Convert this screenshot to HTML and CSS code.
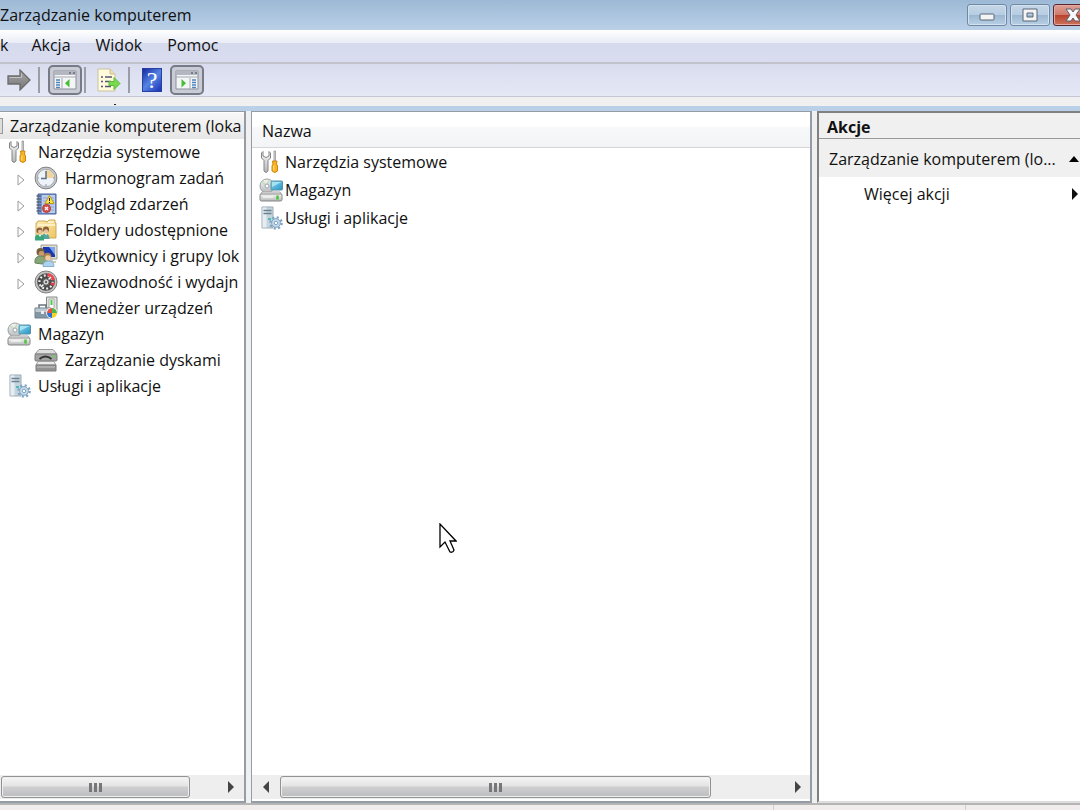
FILE: index.html
```html
<!DOCTYPE html>
<html lang="pl">
<head>
  <meta charset="UTF-8">
  <meta name="viewport" content="width=device-width, initial-scale=1.0">
  <title>Zarządzanie komputerem</title>
  <link rel="stylesheet" href="styles.css">
</head>
<body>
<!-- icon set -->
<svg class="sprite" aria-hidden="true">
  <defs>
    <linearGradient id="metal" x1="0" y1="0" x2="0" y2="1">
      <stop offset="0" stop-color="#f8f8f8"/><stop offset="1" stop-color="#b4b7b9"/>
    </linearGradient>
    <linearGradient id="screen" x1="0" y1="0" x2="1" y2="1">
      <stop offset="0" stop-color="#8ad6ee"/><stop offset="1" stop-color="#2893c4"/>
    </linearGradient>
    <linearGradient id="folder" x1="0" y1="0" x2="1" y2="1">
      <stop offset="0" stop-color="#fdeeb8"/><stop offset="1" stop-color="#edc464"/>
    </linearGradient>
    <linearGradient id="arrow" x1="0" y1="0" x2="0" y2="1">
      <stop offset="0" stop-color="#a8a8a8"/><stop offset="1" stop-color="#757575"/>
    </linearGradient>
  </defs>
  <symbol id="tools" viewBox="0 0 24 24">
    <path d="M4 1.500 2.500 3v5L5 10.500V21q2 3 4 0V10.500L11.500 8V3L10 1.500V6L7 7.500 4 6z" fill="url(#metal)" stroke="#858585"/>
    <path d="M15 1h1.500v11H15z" fill="#ddd" stroke="#888" stroke-width=".7"/>
    <path d="M13.500 11h4.500l-.5 3 1 2v5q-2.500 3-5.500 0v-5l1-2z" fill="#f8b521" stroke="#cd860f"/>
    <path d="M14.800 15.500v5" stroke="#ffe18a"/>
  </symbol>
  <symbol id="clock" viewBox="0 0 24 24">
    <circle cx="12" cy="12" r="10.900" fill="#c6c8ca" stroke="#7f8184"/>
    <circle cx="12" cy="12" r="8.700" fill="#eef3f9" stroke="#a6adb5"/>
    <path d="M12 12V4a8 8 0 0 1 8 8z" fill="#f3d59b"/>
    <path d="M12 5v7.500H7" fill="none" stroke="#5c7086" stroke-width="1.500"/>
    <path d="M12 18v2M4 12h1M19 12h1" stroke="#8795a5"/>
  </symbol>
  <symbol id="journal" viewBox="0 0 24 24">
    <path d="M4 2h18v20H4z" fill="#7598d2" stroke="#4a6398"/>
    <path d="M8 3h13v18H8z" fill="#bccdec"/>
    <path d="M9 6h11M9 9h11M9 12h11M9 15h11M9 18h11" stroke="#8fa5cc"/>
    <path d="M2.500 4H7M2.500 7H7M2.500 10H7M2.500 13H7M2.500 16H7M2.500 19H7" stroke="#5b6474" stroke-width="1.300"/>
    <path d="M15.500 3.500l4.500 8h-9z" fill="#ffe33d" stroke="#bd9a20"/>
    <path d="M15.500 6v3M15.500 10v1" stroke="#222"/>
    <circle cx="12.500" cy="16.500" r="4" fill="#d84f4c" stroke="#b13b3e"/>
    <path d="M11 15l3 3m0-3l-3 3" stroke="#fff" stroke-width="1.200"/>
  </symbol>
  <symbol id="shared" viewBox="0 0 24 24">
    <path d="M3 5l1-2h7l2 1 2-2h6v3h1v15H2V5z" fill="url(#folder)" stroke="#cfab58"/>
    <path d="M4 7h17M14 4h6" stroke="#fff8d7" stroke-width="1.500"/>
    <circle cx="5.500" cy="12.500" r="3" fill="#8a5f3d"/><circle cx="6" cy="13.800" r="2" fill="#e9c4a0"/>
    <circle cx="12" cy="11.500" r="3" fill="#8a5f3d"/><circle cx="12" cy="13.200" r="2" fill="#e9c4a0"/>
    <path d="M8 21v-3q1-3 4-2 3.500 0 3.500 5z" fill="#55a59e"/>
    <path d="M1 22.500v-3q0-3 4.500-3t4.500 3v3z" fill="#38a679"/>
    <path d="M4.500 16.500L6 19l1.500-2.500M11 15.500l1 2 1-2" fill="#fff"/>
  </symbol>
  <symbol id="users" viewBox="0 0 24 24">
    <path d="M7 1h16v14H7z" fill="#dedccf" stroke="#a09e90"/>
    <path d="M9 3h12v10H9z" fill="#1838b0"/><path d="M15 3h6v8z" fill="#7ba4f2"/>
    <path d="M15 15h4v2h3v2h-8z" fill="#cac8ba"/>
    <circle cx="6.500" cy="8" r="4" fill="#74603c"/><circle cx="7.500" cy="9.700" r="2.800" fill="#c99b6e"/>
    <path d="M1 19q-1-7 6-7t6 7l-5 1z" fill="#86a678" stroke="#65855b"/>
    <circle cx="13.500" cy="12.500" r="3.800" fill="#ac7f4c"/><circle cx="14" cy="14" r="2.800" fill="#edcba5"/>
    <path d="M9 22.500q0-5.500 5.500-5.500t5.500 5.500z" fill="#afd3ee" stroke="#82b0d2"/>
  </symbol>
  <symbol id="gauge" viewBox="0 0 24 24">
    <circle cx="12" cy="12" r="11" fill="#c3c3c3" stroke="#808080"/>
    <circle cx="12" cy="12" r="8.800" fill="#4b4b4b"/>
    <circle cx="12" cy="12" r="6.600" fill="none" stroke="#eee" stroke-width="2.200" stroke-dasharray="1.900 2.200"/>
    <path d="M14 3a9 9 0 0 1 7 7l-3 .5-2-3.500-3-1z" fill="#ee4449"/>
    <path d="M17 12.500l3.700.500-1 3-3-1.500z" fill="#e9393f"/>
    <path d="M7 17L17 7" stroke="#fff" stroke-width="1.500"/>
    <circle cx="12" cy="12" r="3.200" fill="#d6d6d6" stroke="#555"/><circle cx="12" cy="12" r="1.200" fill="#666"/>
  </symbol>
  <symbol id="devices" viewBox="0 0 24 24">
    <path d="M12.500 1H23v17H12.500z" fill="#dfe3e0" stroke="#868d89"/><path d="M15 3h5v9h-5z" fill="#fff" stroke="#aaa"/>
    <path d="M17.500 4v5" stroke="#4cc94b" stroke-width="2"/>
    <path d="M5 12V9h7v3" fill="none" stroke="#68747a" stroke-width="1.500"/>
    <path d="M1 12h16v10H1z" fill="#8497a5" stroke="#6f8090"/><path d="M1.500 12.500h15V16h-15z" fill="#bdcbd3"/>
    <path d="M7 15h3v3H7z" fill="#eee"/>
    <circle cx="18" cy="17" r="5.800" fill="#fff"/>
    <path d="M18 17h-5a5 5 0 0 1 5-5z" fill="#e4533f"/><path d="M18 17v-5a5 5 0 0 1 5 5z" fill="#4fb54d"/>
    <path d="M18 17h5a5 5 0 0 1-5 5z" fill="#f5d627"/><path d="M18 17v5a5 5 0 0 1-5-5z" fill="#2f70d2"/>
  </symbol>
  <symbol id="storage" viewBox="0 0 24 24">
    <circle cx="8" cy="8" r="7" fill="url(#metal)" stroke="#9a9f9f"/>
    <path d="M8 8L3 4M8 8l2-6" stroke="#c9dcc5" stroke-width="2"/>
    <circle cx="8" cy="8" r="2" fill="#fff" stroke="#9aa6a6"/>
    <rect x="12" y="3" width="11.500" height="9" rx="1" fill="url(#screen)" stroke="#5790a8"/>
    <path d="M13 4h9.500L13 9z" fill="#a5e2f2"/>
    <path d="M3 14h18l2 3H1z" fill="#f1f1f1" stroke="#a5a5a5"/>
    <rect x="1" y="16" width="22" height="7" rx="1.500" fill="url(#metal)" stroke="#858585"/>
    <path d="M4 19h10" stroke="#fff"/><path d="M18.500 17.500v4" stroke="#4bc636" stroke-width="2.500"/>
  </symbol>
  <symbol id="disk" viewBox="0 0 24 24">
    <path d="M5 1.500h14L23 6H1z" fill="#dedede" stroke="#999"/>
    <rect x="1" y="6" width="22" height="7" rx="1" fill="#a2a3a2" stroke="#7d7d7d"/>
    <path d="M5.500 11q6-5 12 0" stroke="#333" stroke-width="1.800" fill="none"/>
    <path d="M18 8.500h2.500" stroke="#68d451" stroke-width="2"/>
    <path d="M4 13.500h16l2 3.500H2z" fill="#ebebeb" stroke="#a2a2a2"/>
    <path d="M2 17h20v6H2z" fill="#939393" stroke="#7d7d7d"/><path d="M3 19h18" stroke="#c8c8c8"/>
  </symbol>
  <symbol id="services" viewBox="0 0 24 24">
    <path d="M3 1h11v21H3z" fill="#c5d3dc" stroke="#9cabb4"/>
    <path d="M3.500 1.500h4v20h-4z" fill="#e5edf2"/>
    <path d="M4.500 4.500h8M4.500 7.500h8" stroke="#6c8290" stroke-width="1.300"/><path d="M9 13h3" stroke="#4dbbb9" stroke-width="2"/>
    <circle cx="17" cy="17" r="5.500" fill="none" stroke="#7ea3c3" stroke-width="2.600" stroke-dasharray="2 2.320"/>
    <circle cx="17" cy="17" r="4.400" fill="#c2d8e8" stroke="#86a9c6"/><circle cx="17" cy="17" r="1.700" fill="#fff" stroke="#86a9c6"/>
  </symbol>
  <symbol id="panel-left" viewBox="0 0 24 22">
    <path d="M1 2h22v18H1z" fill="#f4f5f7" stroke="#8d9097"/><path d="M1 2h22v4H1z" fill="#b4b7c0"/>
    <path d="M16 4h2m2 0h2" stroke="#646b77" stroke-width="1.300"/>
    <path d="M1 8h22M9 9v11" stroke="#a6a9b0"/>
    <path d="M3 11h4M3 13.500h4M3 16h4M3 18.500h4" stroke="#4d86bf" stroke-width="1.300"/>
    <path d="M16.500 10v8.500L12 14.200z" fill="#44be32"/>
  </symbol>
  <symbol id="panel-right" viewBox="0 0 24 22">
    <path d="M1 2h22v18H1z" fill="#f4f5f7" stroke="#8d9097"/><path d="M1 2h22v4H1z" fill="#b4b7c0"/>
    <path d="M16 4h2m2 0h2" stroke="#646b77" stroke-width="1.300"/>
    <path d="M1 8h22M15 9v11" stroke="#a6a9b0"/>
    <path d="M17 11h4M17 13.500h4M17 16h4M17 18.500h4" stroke="#4d86bf" stroke-width="1.300"/>
    <path d="M6.500 10v8.500l4.500-4.300z" fill="#44be32"/>
  </symbol>
  <symbol id="export" viewBox="0 0 24 24">
    <path d="M1 1h12l5 5v17H1z" fill="#fffbdc" stroke="#cbc19c"/><path d="M13 1v5h5" fill="#eee0a8" stroke="#cbc19c"/>
    <path d="M4 9h2m2 0h7M4 13.500h2m2 0h6M4 18.500h2m2 0h6" stroke="#56556f" stroke-width="1.500"/>
    <path d="M12 13.500h5V9.500l6 6-6 6v-4h-5z" fill="#79da4c" stroke="#5ab83f"/>
  </symbol>
  <symbol id="forward" viewBox="0 0 24 22">
    <path d="M1 7h12V1l10 10-10 10v-6H1z" fill="url(#arrow)" stroke="#6b6b6b" stroke-width="1.300"/>
    <path d="M2.500 8.500h12V4.500" fill="none" stroke="#c3c3c3"/>
  </symbol>
  <symbol id="twisty" viewBox="0 0 8 12"><path d="M1 1v10l6-5z" fill="#fff" stroke="#9b9b9b"/></symbol>
  <symbol id="arrow-right" viewBox="0 0 6 12"><path d="M0 0v12l6-6z" fill="currentColor"/></symbol>
  <symbol id="arrow-left" viewBox="0 0 6 12"><path d="M6 0v12L0 6z" fill="currentColor"/></symbol>
</svg>

<header class="titlebar">
  <h1>Zarządzanie komputerem</h1>
  <div class="window-buttons">
    <button class="win-btn" aria-label="Minimalizuj"><svg width="18" height="14"><rect x="2" y="6" width="14" height="6" rx="1" fill="#f4f4f4" stroke="#596675"/></svg></button>
    <button class="win-btn" aria-label="Maksymalizuj"><svg width="18" height="14"><path fill-rule="evenodd" d="M2 1h14v12H2zM6 5v4h6V5z" fill="#f4f4f4" stroke="#596675"/></svg></button>
    <button class="win-btn close" aria-label="Zamknij"><svg width="18" height="14"><path d="M2 1h5l2 3 2-3h5l-4 6 4 6h-5l-2-3-2 3H2l4-6z" fill="#f8f8f8" stroke="#5d6070"/></svg></button>
  </div>
</header>

<nav class="menubar">
  <button>k</button>
  <button>Akcja</button>
  <button>Widok</button>
  <button>Pomoc</button>
</nav>

<div class="toolbar">
  <button class="tool" aria-label="Dalej"><svg width="24" height="22"><use href="#forward"/></svg></button>
  <span class="separator"></span>
  <button class="tool pressed" aria-label="Pokaż drzewo konsoli"><svg width="24" height="22"><use href="#panel-left"/></svg></button>
  <span class="separator"></span>
  <button class="tool" aria-label="Eksportuj listę"><svg width="24" height="24"><use href="#export"/></svg></button>
  <span class="separator"></span>
  <button class="tool" aria-label="Pomoc"><span class="help">?</span></button>
  <button class="tool pressed" aria-label="Pokaż okienko akcji"><svg width="24" height="22"><use href="#panel-right"/></svg></button>
</div>
<div class="strip"><span class="speck"></span></div>

<main class="panes">
  <section class="pane tree-pane">
    <ul class="tree">
      <li class="root"><span class="root-icon"></span>Zarządzanie komputerem (loka</li>
      <li><svg class="icon"><use href="#tools"/></svg>Narzędzia systemowe</li>
      <li class="child"><svg class="twisty"><use href="#twisty"/></svg><svg class="icon"><use href="#clock"/></svg>Harmonogram zadań</li>
      <li class="child"><svg class="twisty"><use href="#twisty"/></svg><svg class="icon"><use href="#journal"/></svg>Podgląd zdarzeń</li>
      <li class="child"><svg class="twisty"><use href="#twisty"/></svg><svg class="icon"><use href="#shared"/></svg>Foldery udostępnione</li>
      <li class="child"><svg class="twisty"><use href="#twisty"/></svg><svg class="icon"><use href="#users"/></svg>Użytkownicy i grupy lok</li>
      <li class="child"><svg class="twisty"><use href="#twisty"/></svg><svg class="icon"><use href="#gauge"/></svg>Niezawodność i wydajn</li>
      <li class="child"><span class="twisty"></span><svg class="icon"><use href="#devices"/></svg>Menedżer urządzeń</li>
      <li><svg class="icon"><use href="#storage"/></svg>Magazyn</li>
      <li class="child"><span class="twisty"></span><svg class="icon"><use href="#disk"/></svg>Zarządzanie dyskami</li>
      <li><svg class="icon"><use href="#services"/></svg>Usługi i aplikacje</li>
    </ul>
    <div class="scrollbar tree-scroll">
      <div class="thumb"><i></i><i></i><i></i></div>
      <button aria-label="Przewiń w prawo"><svg width="6" height="12"><use href="#arrow-right"/></svg></button>
    </div>
  </section>

  <section class="pane list-pane">
    <table class="list">
      <thead>
        <tr><th>Nazwa</th></tr>
      </thead>
      <tbody>
        <tr><td><div class="cell"><svg class="icon"><use href="#tools"/></svg>Narzędzia systemowe</div></td></tr>
        <tr><td><div class="cell"><svg class="icon"><use href="#storage"/></svg>Magazyn</div></td></tr>
        <tr><td><div class="cell"><svg class="icon"><use href="#services"/></svg>Usługi i aplikacje</div></td></tr>
      </tbody>
    </table>
    <div class="scrollbar list-scroll">
      <button aria-label="Przewiń w lewo"><svg width="6" height="12"><use href="#arrow-left"/></svg></button>
      <div class="thumb"><i></i><i></i><i></i></div>
      <button aria-label="Przewiń w prawo"><svg width="6" height="12"><use href="#arrow-right"/></svg></button>
    </div>
  </section>

  <aside class="pane actions">
    <h2>Akcje</h2>
    <button class="group">Zarządzanie komputerem (lo...<svg width="10" height="6"><path d="M5 0l5 6H0z"/></svg></button>
    <button class="more">Więcej akcji<svg width="6" height="12"><use href="#arrow-right"/></svg></button>
  </aside>
</main>

<footer class="statusbar"><span></span><span></span><span></span></footer>

<svg class="cursor" width="18" height="31" viewBox="0 0 18 31" aria-hidden="true">
  <path d="M1 1v23l5-5 5 10q3 1 4-2l-4-9h6z" fill="#fff" stroke="#000" stroke-width="1.300"/>
</svg>
</body>
</html>
```

FILE: styles.css
```css
* {
    box-sizing: border-box;
}

body {
    display: flex;
    flex-direction: column;
    height: 100vh;
    margin: 0;
    overflow: hidden;
    background: #f0f0f0;
    color: #111;
    font-family: "Open Sans", "Noto Sans", sans-serif;
    font-size: 16px;
    line-height: 24px;
    white-space: nowrap;
}

button {
    margin: 0;
    padding: 0;
    border: none;
    background: none;
    color: inherit;
    font: inherit;
}

h1, h2, ul {
    margin: 0;
    padding: 0;
    font-size: inherit;
}

svg {
    display: block;
    flex: none;
}

.sprite {
    position: absolute;
    width: 0;
    height: 0;
}

/* title bar */
.titlebar {
    display: flex;
    flex: none;
    justify-content: space-between;
    height: 30px;
    background: linear-gradient(#9db9d5, #bad0e8);
}

.titlebar h1 {
    padding-top: 3px;
    font-weight: normal;
}

.window-buttons {
    display: flex;
    gap: 3px;
    margin-right: -13px;
    padding-top: 4px;
}

.win-btn {
    display: flex;
    align-items: center;
    justify-content: center;
    width: 40px;
    height: 22px;
    border: 1px solid #6f89a3;
    border-radius: 3px;
    background: linear-gradient(#c5d7e8 0%, #b7cde2 50%, #9bb6d0 50%, #b8d0e5 100%);
    box-shadow: inset 0 0 0 1px #d4e2f0;
}

.win-btn.close {
    border-color: #5b2530;
    background: linear-gradient(#dda094 0%, #cf796b 50%, #b9402b 50%, #cc7359 100%);
    box-shadow: inset 0 0 0 1px #e2aaa0;
}

/* menu */
.menubar {
    display: flex;
    flex: none;
    gap: 25px;
    height: 34px;
    padding-bottom: 2px;
    border-bottom: 2px solid #c2c2cb;
    background: linear-gradient(#fff 0, #e9ecf7 13px, #d6daed 13px, #d9ddef 100%);
}

.menubar button:first-child {
    margin-right: -2px;
}

/* toolbar */
.toolbar {
    display: flex;
    flex: none;
    align-items: center;
    height: 33px;
    padding-left: 7px;
    border-bottom: 1px solid #c4c7d2;
    background: linear-gradient(#d8dcee, #e5e9f6);
}

.tool {
    display: flex;
    align-items: center;
    justify-content: center;
    min-width: 24px;
    height: 30px;
}

.tool.pressed {
    width: 34px;
    border: 2px solid #777b86;
    border-radius: 5px;
    background: #c9ccd7;
}

.separator {
    width: 2px;
    height: 26px;
    margin: 0 8px 0 7px;
    background: #9a9da6;
}

.pressed + .separator {
    margin: 0 11px 0 2px;
}

.help {
    width: 20px;
    height: 24px;
    margin: 0 8px 0 4px;
    border: 1px solid #2840a0;
    background: linear-gradient(135deg, #1628a0, #5684e4 50%, #1a30b4);
    color: #fff;
    font-family: "Liberation Serif", serif;
    font-size: 24px;
    line-height: 22px;
}

.strip {
    flex: none;
    height: 14px;
    padding: 7px 0 0 114px;
    border-bottom: 5px solid #b9d0e8;
    background: #f0f0f0;
}

.speck {
    display: block;
    width: 2px;
    height: 1px;
    background: #222;
}

/* panes */
.panes {
    display: grid;
    flex: 1;
    grid-template-columns: 246px 1fr 263px;
    gap: 5px;
    min-height: 0;
}

.pane {
    display: flex;
    flex-direction: column;
    min-width: 0;
    overflow: hidden;
    border: 2px solid #949ca6;
    border-top-width: 1px;
    background: #fff;
}

.tree-pane {
    border-left: none;
}

.tree {
    flex: 1;
    padding-top: 1px;
    list-style: none;
}

.tree li {
    display: flex;
    align-items: center;
    height: 26px;
    padding-left: 7px;
    overflow: hidden;
}

.icon {
    width: 24px;
    height: 24px;
    margin-right: 7px;
}

.tree .root {
    padding-left: 0;
    background: linear-gradient(#f8f8f8, #e6e6e6);
}

.root-icon {
    width: 3px;
    height: 16px;
    margin-right: 7px;
    border: 1px solid #999;
    border-left: none;
    background: #ddd;
}

.tree .child {
    padding-left: 17px;
}

.twisty {
    width: 8px;
    height: 12px;
    margin: 4px 9px 0 0;
}

.list-pane {
    border-left-width: 1px;
}

.list {
    width: 100%;
    border-collapse: collapse;
}

.list th {
    height: 35px;
    padding: 3px 10px 0;
    border-bottom: 1px solid #d5d5d5;
    background: linear-gradient(#fff 40%, #f7f8f9 45%, #f3f4f6);
    font-weight: normal;
    text-align: left;
}

.list td {
    padding: 0;
}

.cell {
    display: flex;
    align-items: center;
    height: 28px;
    padding-left: 7px;
}

.cell .icon {
    margin-right: 2px;
}

/* scrollbars */
.scrollbar {
    display: grid;
    flex: none;
    align-items: center;
    height: 24px;
    margin-top: auto;
    margin-bottom: 2px;
    background: #eee;
}

.tree-scroll {
    grid-template-columns: 1fr 54px;
    padding-left: 1px;
}

.tree-scroll button {
    padding-left: 28px;
}

.list-scroll {
    grid-template-columns: 28px 1fr 99px;
}

.scrollbar button {
    display: flex;
    justify-content: center;
    color: #444;
}

.list-scroll button:last-child {
    justify-content: flex-end;
    padding-right: 9px;
}

.thumb {
    display: flex;
    align-items: center;
    justify-content: center;
    gap: 2px;
    height: 22px;
    border: 1px solid #929292;
    border-radius: 3px;
    background: linear-gradient(#f5f5f5 0%, #e4e4e4 45%, #cfcfd1 50%, #bcbdc0 100%);
    box-shadow: inset 0 0 0 1px #f0f0f0;
}

.thumb i {
    width: 3px;
    height: 9px;
    background: #777;
}

/* actions */
.actions {
    border-right: none;
    border-color: #808080;
    border-top-width: 2px;
    border-bottom: 2px solid #ddd;
}

.actions h2 {
    height: 26px;
    padding-left: 8px;
    border-bottom: 1px solid #999;
    background: #f0f0f0;
    line-height: 28px;
}

.actions button {
    display: flex;
    align-items: center;
    justify-content: space-between;
    height: 34px;
}

.actions .group {
    height: 38px;
    padding: 2px 1px 0 10px;
    background: #f0f0f0;
}

.actions .more {
    padding: 0 2px 0 45px;
}

.statusbar {
    display: grid;
    flex: none;
    grid-template-columns: 1fr 192px 115px;
    height: 7px;
    border-top: 2px solid #b5b5b5;
    background: #f0edec;
}

.statusbar span + span {
    border-left: 1px solid #cfcfcf;
}

.cursor {
    position: absolute;
    top: 523px;
    left: 439px;
}
```
